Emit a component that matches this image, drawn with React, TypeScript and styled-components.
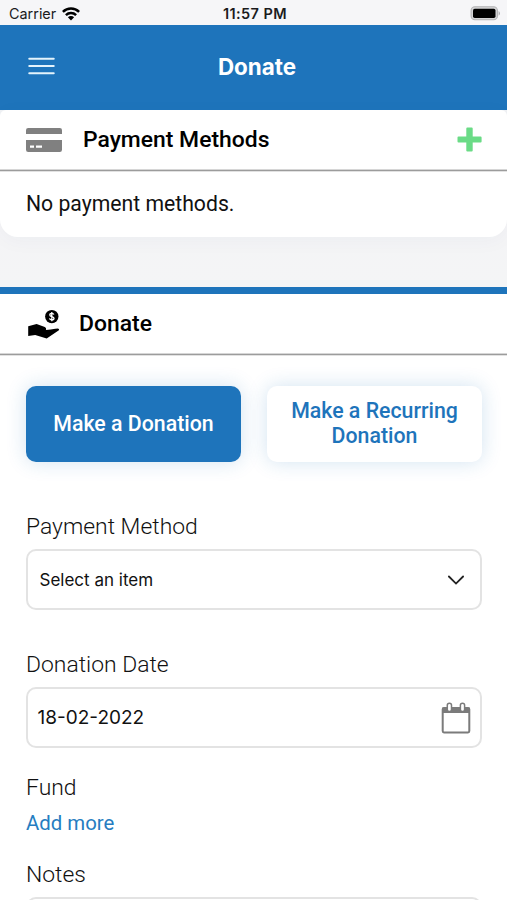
import React from 'react';
import styled, { createGlobalStyle } from 'styled-components';

const blue = '#1e74bb';

const GlobalStyle = createGlobalStyle`
  * { box-sizing: border-box; }
  html, body { margin: 0; padding: 0; overflow: hidden; background: #fff; }
  button { font: inherit; border: 0; margin: 0; padding: 0; background: none; }
  svg { display: block; flex: none; }
`;

const Screen = styled.div`
  display: flex;
  flex-direction: column;
  width: 507px;
  height: 900px;
  overflow: hidden;
  background: #fff;
  color: #000;
  font-family: Roboto, sans-serif;
`;

const StatusBar = styled.div`
  display: grid;
  grid-template-columns: 1fr auto 1fr;
  align-items: center;
  flex: none;
  height: 25px;
  padding: 2px 6px 0 9px;
  background: #f6f6f8;
  color: #1b1b1d;
  font-family: Inter, sans-serif;
  font-size: 14.4px;
`;

const Carrier = styled.div`
  display: flex;
  align-items: center;
  gap: 6px;
`;

const Clock = styled.div`
  font-weight: 600;
  font-size: 14.5px;
  letter-spacing: 0.4px;
`;

const Battery = styled.div`
  display: flex;
  justify-content: flex-end;
`;

const NavBar = styled.header`
  display: grid;
  grid-template-columns: 1fr auto 1fr;
  align-items: center;
  flex: none;
  height: 85px;
  padding: 0 21px 3px 28px;
  background: ${blue};
  color: #fff;
`;

const NavTitle = styled.h1`
  margin: 0;
  font-family: Inter, sans-serif;
  font-size: 22.4px;
  font-weight: 700;
`;

const MenuButton = styled.button`
  justify-self: start;
`;

const PaymentPanel = styled.div`
  flex: none;
  height: 177px;
  background: linear-gradient(#eff1f4, #f4f4f6 60%, #f4f5f6);
`;

const PaymentCard = styled.section`
  height: 126.5px;
  border-radius: 6px 6px 18px 18px;
  background: #fff;
  box-shadow: 0 4px 20px rgba(30, 60, 100, 0.035);
`;

const SectionHeader = styled.div<{ $gap: number }>`
  display: flex;
  align-items: center;
  gap: ${(p) => p.$gap}px;
  height: 61px;
  padding: 0 25px 1px 26px;
  border-bottom: 1px solid #9c9c9c;
  box-shadow: 0 1px 0 #e2e2e2, inset 0 -1px 0 #d6d6d6;
`;

const SectionTitle = styled.h2`
  flex: 1;
  margin: 0;
  font-size: 22.9px;
  font-weight: 500;
`;

const EmptyText = styled.p`
  display: flex;
  align-items: center;
  height: 65px;
  margin: 0;
  padding-left: 26px;
  font-size: 21.2px;
  color: #111;
`;

const DonateCard = styled.section`
  flex: 1;
  border-top: 7px solid ${blue};
  background: #fff;
`;

const Choices = styled.div`
  display: grid;
  grid-template-columns: 215px 215px;
  justify-content: space-between;
  padding: 31px 25px 0 26px;
`;

const ChoiceButton = styled.button<{ $active?: boolean }>`
  && {
    height: 75.5px;
    padding-bottom: 1px;
    border-radius: 10px;
    background: ${(p) => (p.$active ? blue : '#fff')};
    color: ${(p) => (p.$active ? '#fff' : blue)};
    box-shadow: 0 0 20px rgba(30, 116, 187, 0.2);
    font-size: 21.3px;
    font-weight: 500;
    line-height: 25px;
  }
`;

const Field = styled.div<{ $top: number }>`
  display: flex;
  flex-direction: column;
  padding: 0 25px 0 26px;
  margin-top: ${(p) => p.$top}px;
`;

const Label = styled.label`
  height: 28px;
  font-size: 22.9px;
  font-weight: 300;
  line-height: 28px;
  color: #111;
`;

const InputBox = styled.div<{ $size: number; $left: number; $right: number }>`
  display: flex;
  align-items: center;
  justify-content: space-between;
  height: 61px;
  margin-top: 8px;
  padding: 0 ${(p) => p.$right}px 0 ${(p) => p.$left}px;
  border: 2px solid #e3e3e3;
  border-radius: 10px;
  font-family: Inter, sans-serif;
  font-size: ${(p) => p.$size}px;
  color: #111;
`;

const AddLink = styled.a`
  height: 26px;
  margin-top: 8px;
  font-size: 20.4px;
  line-height: 26px;
  color: #267dc1;
`;

const WifiIcon = () => (
  <svg width="18" height="14" viewBox="0 0 18 14">
    <g fill="none" stroke="#000" strokeWidth="2.5">
      <path d="M0.9 4.9a11.6 11.6 0 0 1 16.2 0" />
      <path d="M3.9 8.1a7.3 7.3 0 0 1 10.2 0" />
    </g>
    <path d="M5.9 10.2a4.4 4.4 0 0 1 6.2 0L9 13.4z" fill="#000" />
  </svg>
);

const BatteryIcon = () => (
  <svg width="31" height="15" viewBox="0 0 31 15">
    <rect x="1.1" y="0.8" width="26.3" height="13" rx="3.8" fill="#d5d5d6" stroke="#b2b2b4" strokeWidth="1.1" />
    <rect x="3" y="2.7" width="22.5" height="9.3" rx="1.7" fill="#000" />
    <path d="M28.6 5a2.9 2.9 0 0 1 0 4.8z" fill="#a8a8aa" />
  </svg>
);

const MenuIcon = () => (
  <svg width="27" height="18" viewBox="0 0 27 18">
    <g stroke="#e4f3fc" strokeWidth="2.1" strokeLinecap="round">
      <path d="M1.3 1.7h24.4M1.3 9h24.4M1.3 16.2h24.4" />
    </g>
  </svg>
);

const CardIcon = () => (
  <svg width="36" height="24" viewBox="0 0 36 24">
    <path d="M2.2 0h31.6Q36 0 36 2.2V6H0V2.2Q0 0 2.2 0z" fill="#808080" />
    <path
      fillRule="evenodd"
      d="M0 12h36v9.8q0 2.2-2.2 2.2H2.2Q0 24 0 21.8zM4 17.6v2.2h4v-2.2zM10 17.6v2.2h6v-2.2z"
      fill="#808080"
    />
  </svg>
);

const PlusIcon = () => (
  <svg width="25" height="25" viewBox="0 0 25 25">
    <path
      d="M10.3 0.5h4.4q1 0 1 1v7.9h7.9q1 0 1 1v4.2q0 1-1 1h-7.9v8q0 1-1 1h-4.400q-1 0-1-1v-8H1.5q-1 0-1-1v-4.2q0-1 1-1h7.8V1.5q0-1 1-1z"
      fill="#6adb86"
    />
  </svg>
);

const HandCoinIcon = () => (
  <svg width="35" height="30" viewBox="0 0 35 30">
    <circle cx="25.8" cy="7.6" r="6.7" fill="#000" />
    <path
      d="M27.9 5.6c-.4-1-1.2-1.3-2.1-1.3-1.2 0-2 .6-2 1.6 0 2.3 4.2 1.1 4.2 3.3 0 1-.9 1.7-2.2 1.7-1.2 0-2-.5-2.3-1.6M25.8 3v9.2"
      fill="none"
      stroke="#fff"
      strokeWidth="1.3"
    />
    <path
      d="M2.2 17.2L10.6 15.1L18.8 17.9Q20.4 18.6 20.1 20.2L19.9 20.900Q24.8 20.400 29.300 19.7L32 19.400Q33.8 19.7 32.9 21.300L20.7 29.400L9.2 26.1L2.2 27.1z"
      fill="#000"
    />
  </svg>
);

const ChevronIcon = () => (
  <svg width="18" height="12" viewBox="0 0 18 12">
    <path d="M1.9 2.5L9 9.6L16.1 2.5" fill="none" stroke="#222" strokeWidth="1.8" strokeLinecap="round" />
  </svg>
);

const CalendarIcon = () => (
  <svg width="30" height="32" viewBox="0 0 30 32">
    <path d="M1.5 5.5h27v5.500h-27z" fill="#7b7b7b" />
    <rect x="1.7" y="6" width="26.6" height="24.4" rx="1.3" fill="none" stroke="#7b7b7b" strokeWidth="2" />
    <g fill="#fff" stroke="#7b7b7b" strokeWidth="1.5">
      <rect x="6.3" y="1.2" width="4.2" height="8.4" rx="2.1" />
      <rect x="19.4" y="1.2" width="4.2" height="8.4" rx="2.1" />
    </g>
  </svg>
);

export default function App() {
  return (
    <>
      <GlobalStyle />
      <Screen>
        <StatusBar>
          <Carrier>
            Carrier
            <WifiIcon />
          </Carrier>
          <Clock>11:57 PM</Clock>
          <Battery>
            <BatteryIcon />
          </Battery>
        </StatusBar>
        <NavBar>
          <MenuButton aria-label="Menu">
            <MenuIcon />
          </MenuButton>
          <NavTitle>Donate</NavTitle>
        </NavBar>
        <PaymentPanel>
          <PaymentCard>
            <SectionHeader $gap={21}>
              <CardIcon />
              <SectionTitle>Payment Methods</SectionTitle>
              <PlusIcon />
            </SectionHeader>
            <EmptyText>No payment methods.</EmptyText>
          </PaymentCard>
        </PaymentPanel>
        <DonateCard>
          <SectionHeader $gap={18}>
            <HandCoinIcon />
            <SectionTitle>Donate</SectionTitle>
          </SectionHeader>
          <Choices>
            <ChoiceButton $active>Make a Donation</ChoiceButton>
            <ChoiceButton>
              Make a Recurring
              <br />
              Donation
            </ChoiceButton>
          </Choices>
          <Field $top={51.5}>
            <Label>Payment Method</Label>
            <InputBox $size={17} $left={11.5} $right={15}>
              Select an item
              <ChevronIcon />
            </InputBox>
          </Field>
          <Field $top={41}>
            <Label>Donation Date</Label>
            <InputBox $size={19} $left={9.5} $right={9}>
              18-02-2022
              <CalendarIcon />
            </InputBox>
          </Field>
          <Field $top={26}>
            <Label>Fund</Label>
            <AddLink>Add more</AddLink>
          </Field>
          <Field $top={25}>
            <Label>Notes</Label>
            <InputBox $size={17} $left={12} $right={12} />
          </Field>
        </DonateCard>
      </Screen>
    </>
  );
}
